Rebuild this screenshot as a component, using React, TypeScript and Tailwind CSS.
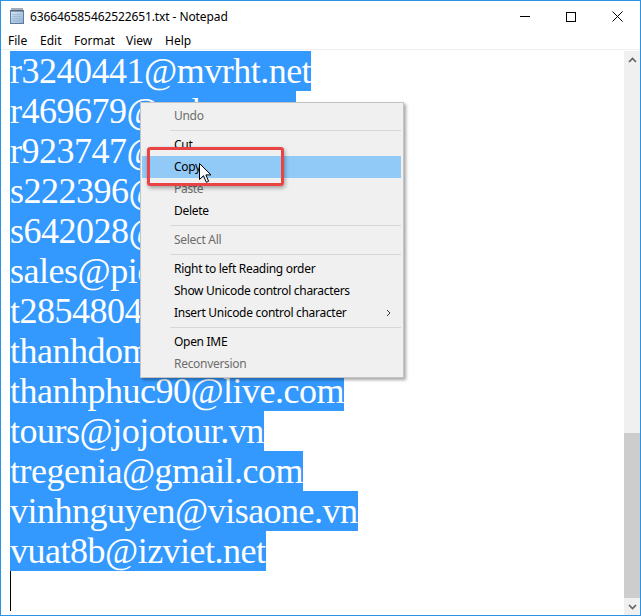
import React from "react";

const lines = [
  "r3240441@mvrht.net",
  "r469679@yahoo.net",
  "r923747@yahoo.com",
  "s222396@gmail.com",
  "s642028@gmail.com",
  "sales@picotravel.vn",
  "t2854804@yahoo.com",
  "thanhdom@gmail.com",
  "thanhphuc90@live.com",
  "tours@jojotour.vn",
  "tregenia@gmail.com",
  "vinhnguyen@visaone.vn",
  "vuat8b@izviet.net",
];

type Item = { label?: string; disabled?: boolean; sep?: boolean; active?: boolean; sub?: boolean };

const menuItems: Item[] = [
  { label: "Undo", disabled: true },
  { sep: true },
  { label: "Cut" },
  { label: "Copy", active: true },
  { label: "Paste", disabled: true },
  { label: "Delete" },
  { sep: true },
  { label: "Select All", disabled: true },
  { sep: true },
  { label: "Right to left Reading order" },
  { label: "Show Unicode control characters" },
  { label: "Insert Unicode control character", sub: true },
  { sep: true },
  { label: "Open IME" },
  { label: "Reconversion", disabled: true },
];

function NotepadIcon() {
  return (
    <svg width="16" height="17" viewBox="0 0 16 17">
      <defs>
        <linearGradient id="np" x1="0" y1="0" x2="1" y2="1">
          <stop offset="0" stopColor="#d9e8f6" />
          <stop offset="1" stopColor="#8fb1d3" />
        </linearGradient>
      </defs>
      <rect x="1.5" y="3.5" width="13" height="13" fill="url(#np)" stroke="#5b7c9c" />
      <path d="M3 7.5h10M3 9.5h10M3 11.5h10M3 13.5h10" stroke="#9bb6cf" strokeWidth="0.8" />
      <path d="M3 1v4M5 1v4M7 1v4M9 1v4M11 1v4M13 1v4" stroke="#4a5c70" strokeWidth="1" />
    </svg>
  );
}

export default function App() {
  const ui = { fontFamily: '"Noto Sans", "Open Sans", sans-serif' };
  return (
    <div
      className="relative w-[641px] h-[616px] border border-[#2b93e5] bg-white flex flex-col overflow-hidden"
      style={ui}
    >
      {/* Title bar */}
      <div className="h-[31px] flex items-center shrink-0">
        <div className="ml-[8px] mt-[-2px] flex items-center">
          <NotepadIcon />
        </div>
        <div className="ml-[5px] text-[12px] text-black leading-none tracking-[-0.1px]">636646585462522651.txt - Notepad</div>
        <div className="ml-auto flex h-full">
          <div className="w-[46px] h-full flex items-center justify-center">
            <div className="w-[10px] h-px bg-black" />
          </div>
          <div className="w-[46px] h-full flex items-center justify-center">
            <div className="w-[10px] h-[10px] border border-black" />
          </div>
          <div className="w-[46px] h-full flex items-center justify-center">
            <svg width="11" height="11" viewBox="0 0 11 11">
              <path d="M0.5 0.5L10.5 10.5M10.5 0.5L0.5 10.5" stroke="#000" strokeWidth="1" />
            </svg>
          </div>
        </div>
      </div>

      {/* Menu bar */}
      <div className="h-[17px] flex items-center text-[12px] text-black shrink-0">
        <div className="w-[32px] pl-[7px]">File</div>
        <div className="w-[34px] pl-[7px]">Edit</div>
        <div className="w-[52px] pl-[7px]">Format</div>
        <div className="w-[39px] pl-[7px]">View</div>
        <div className="w-[39px] pl-[7px]">Help</div>
      </div>
      <div className="h-px bg-[#f0f0f0] shrink-0" />

      {/* Edit area */}
      <div className="flex-1 flex min-h-0">
        <div
          className="flex-1 pt-px pl-[9px] text-[36px] tracking-[-0.5px] text-white"
          style={{ fontFamily: '"Liberation Serif", "Times New Roman", serif' }}
        >
          {lines.map((l) => (
            <div key={l} className="h-[40px] leading-[40px] whitespace-nowrap">
              <span className="inline-block h-[40px] bg-[#3399ff]">{l}</span>
            </div>
          ))}
          <div className="h-[40px] w-px bg-black" />
        </div>
        <div className="w-[16px] mt-px bg-[#f0f0f0] flex flex-col">
          <div className="h-[17px] flex items-center justify-center">
            <svg width="9" height="6" viewBox="0 0 9 6">
              <path d="M1 5L4.5 1.5L8 5" stroke="#606060" strokeWidth="1.6" fill="none" />
            </svg>
          </div>
          <div className="flex-1" />
          <div className="h-[165px] bg-[#cdcdcd]" />
          <div className="h-[17px] flex items-center justify-center">
            <svg width="9" height="6" viewBox="0 0 9 6">
              <path d="M1 1L4.5 4.5L8 1" stroke="#606060" strokeWidth="1.6" fill="none" />
            </svg>
          </div>
        </div>
      </div>

      {/* Context menu */}
      <div className="absolute left-[139px] top-[101px] w-[264px] h-[276px] bg-[#f0f0f0] border border-[#c4c4c4] shadow-[2px_2px_3px_rgba(0,0,0,0.35)] pt-[2px] pl-px pr-[2px] text-[12px] tracking-[-0.3px]">
        {menuItems.map((it, i) =>
          it.sep ? (
            <div key={i} className="h-[7px] flex items-center">
              <div className="ml-[28px] flex-1 h-px bg-[#d7d7d7]" />
            </div>
          ) : (
            <div
              key={i}
              className={
                "h-[22px] pl-[32px] flex items-center " +
                (it.active ? "bg-[#91c9f7] " : "") +
                (it.disabled ? "text-[#6d6d6d]" : "text-black")
              }
            >
              <span>{it.label}</span>
              {it.sub && (
                <svg className="ml-auto mr-[10px]" width="5" height="8" viewBox="0 0 5 8">
                  <path d="M1 1L4 4L1 7" stroke="#333" strokeWidth="1" fill="none" />
                </svg>
              )}
            </div>
          )
        )}
      </div>

      {/* Red highlight box */}
      <div className="absolute left-[146px] top-[146px] w-[137px] h-[39px] border-[3px] border-[#e94343] rounded-[3px] shadow-[1px_2px_4px_rgba(0,0,0,0.35)]" />

      {/* Mouse pointer */}
      <svg className="absolute left-[198px] top-[162px]" width="13" height="21" viewBox="0 0 13 21">
        <path d="M0.5 0.5L0.5 16.5L4.5 12.7L7.3 19.3L9.6 18.3L6.9 11.9L12 11.9Z" fill="#fff" stroke="#000" strokeWidth="1" strokeLinejoin="round" />
      </svg>
    </div>
  );
}
